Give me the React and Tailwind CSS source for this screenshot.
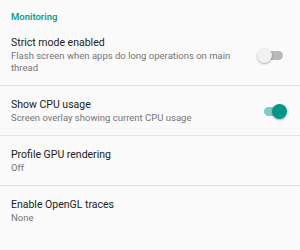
import React from "react";

function Toggle({ on }) {
  return (
    <div className="relative w-[30px] h-[16px] flex items-center">
      <div
        className={
          on
            ? "absolute left-[7px] w-[19px] h-[9px] rounded-full bg-[#80cbc4]"
            : "absolute left-[5px] w-[21px] h-[9px] rounded-full bg-[#b9b9b9]"
        }
      />
      <div
        className={
          on
            ? "absolute left-[15px] w-[15px] h-[15px] rounded-full bg-[#009688] shadow-[0_1px_2px_rgba(0,0,0,0.3)]"
            : "absolute left-0 w-[15px] h-[15px] rounded-full bg-[#f1f1f1] shadow-[0_1px_2px_rgba(0,0,0,0.3)]"
        }
      />
    </div>
  );
}

function Row({ title, sub, toggle, on, last }) {
  return (
    <div
      className={
        "flex items-center pl-[11px] pr-[13px] pt-[12px] pb-[11px] " +
        (last ? "" : "border-b border-[#e4e4e4]")
      }
    >
      <div className="flex-1 min-w-0 pr-[10px]">
        <div className="text-[10.5px] leading-[14px] text-[#212121]">{title}</div>
        <div className="text-[9.5px] leading-[12px] text-[#757575]">{sub}</div>
      </div>
      {toggle && <Toggle on={on} />}
    </div>
  );
}

export default function App() {
  return (
    <div
      className="w-[300px] h-[250px] overflow-hidden bg-[#fafafa]"
      style={{ fontFamily: "Roboto, 'Noto Sans', sans-serif" }}
    >
      <div className="pl-[11px] pt-[11px] pb-[1px] text-[9.5px] leading-[12px] font-medium text-[#009688]">
        Monitoring
      </div>
      <Row
        title="Strict mode enabled"
        sub="Flash screen when apps do long operations on main thread"
        toggle
        on={false}
      />
      <Row
        title="Show CPU usage"
        sub="Screen overlay showing current CPU usage"
        toggle
        on
      />
      <Row title="Profile GPU rendering" sub="Off" />
      <Row title="Enable OpenGL traces" sub="None" last />
      <div className="pl-[11px] pt-[14px] text-[9.5px] leading-[12px] font-medium text-[#009688]">
        Apps
      </div>
    </div>
  );
}
